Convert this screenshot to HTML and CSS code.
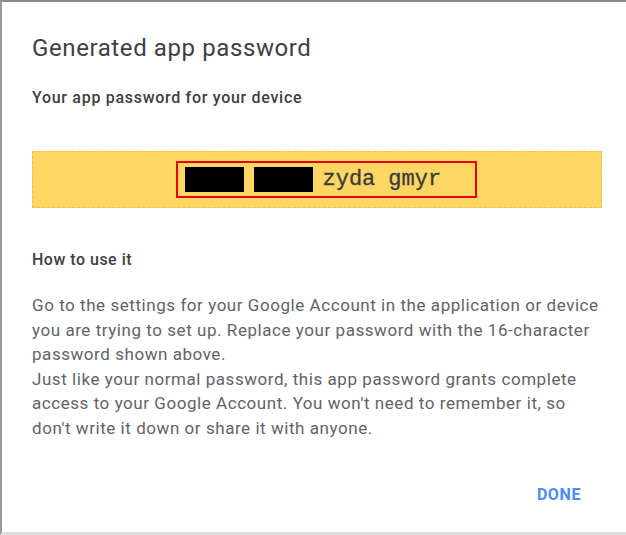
FILE: index.html
```html
<!DOCTYPE html>
<html lang="en">
<head>
  <meta charset="UTF-8">
  <title>Generated app password</title>
  <link rel="stylesheet" href="styles.css">
</head>
<body>
  <div class="dialog">
    <h1 class="title">Generated app password</h1>
    <div class="subtitle">Your app password for your device</div>

    <div class="password-box">
      <div class="password">
        <span class="hidden-chunk"></span>
        <span class="hidden-chunk"></span>
        <span class="chunk">zyda</span>
        <span class="chunk">gmyr</span>
      </div>
    </div>

    <div class="howto">How to use it</div>
    <div class="text">
      <p>Go to the settings for your Google Account in the application or device you are trying to set up. Replace your password with the 16-character password shown above.</p>
      <p>Just like your normal password, this app password grants complete access to your Google Account. You won't need to remember it, so don't write it down or share it with anyone.</p>
    </div>

    <div class="actions">
      <button class="done">DONE</button>
    </div>
  </div>
</body>
</html>
```

FILE: styles.css
```css
body, html {
  margin: 0;
  padding: 0;
  width: 100%;
  height: 100%;
  overflow: hidden;
  background: #ffffff;
  font-family: 'Roboto', 'Liberation Sans', sans-serif;
}

.dialog {
  box-sizing: border-box;
  height: 100%;
  border-top: 2px solid #8c8c8c;
  border-left: 2px solid #9a9a9a;
  border-bottom: 3px solid #dedede;
  padding: 0 24px 0 30px;
  display: flex;
  flex-direction: column;
}

.title {
  margin: 32px 0 0;
  font-size: 24px;
  font-weight: 400;
  letter-spacing: 0.6px;
  color: #3c4043;
  line-height: 28px;
}

.subtitle {
  margin-top: 26px;
  font-size: 16px;
  font-weight: 500;
  letter-spacing: 0.7px;
  color: #3c4043;
  line-height: 20px;
}

.password-box {
  margin-top: 43px;
  height: 57px;
  box-sizing: border-box;
  background: #fdd663;
  border: 1px dashed #f0c14b;
  display: flex;
  align-items: center;
  justify-content: center;
}

.password {
  box-sizing: border-box;
  height: 37px;
  width: 301px;
  padding: 0 0 0 7px;
  border: 2px solid #e8000b;
  display: flex;
  align-items: center;
  gap: 10px;
  margin-left: 18px;
}

.hidden-chunk {
  display: inline-block;
  width: 59px;
  height: 25px;
  background: #000000;
}

.chunk {
  font-family: 'Liberation Mono', monospace;
  font-size: 22px;
  font-weight: 400;
  color: #3a3a3a;
  -webkit-text-stroke: 0.3px #3a3a3a;
}

.chunk:first-of-type {
  margin-left: 5px;
}

.chunk + .chunk {
  margin-left: 3px;
}

.howto {
  margin-top: 42px;
  font-size: 16px;
  font-weight: 500;
  letter-spacing: 0.5px;
  color: #3c4043;
  line-height: 20px;
}

.text {
  margin-top: 23px;
  font-size: 17px;
  letter-spacing: 0.55px;
  color: #5f6368;
  line-height: 24.5px;
}

.text p {
  margin: 0;
}

.actions {
  margin-top: 37px;
  display: flex;
  justify-content: flex-end;
}

.done {
  font-family: 'Roboto', sans-serif;
  font-size: 16px;
  font-weight: 700;
  letter-spacing: 0.6px;
  color: #4c8bf5;
  background: none;
  border: none;
  padding: 8px 21px;
  cursor: pointer;
}
```
